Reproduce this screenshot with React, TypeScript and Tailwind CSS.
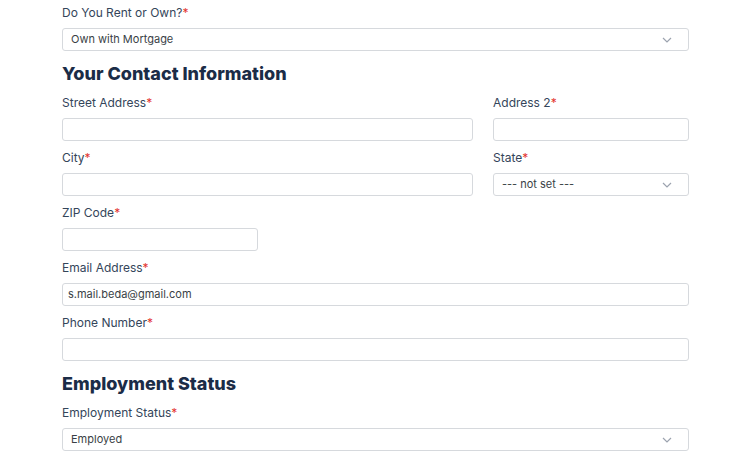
import React from "react";

const Chev = () => (
  <svg width="10" height="6" viewBox="0 0 10 6" className="absolute right-[16px] top-[8px]" fill="none" stroke="#9ca3af" strokeWidth="1.2"><path d="M1 1l4 4 4-4" /></svg>
);

function Field({ label, value, select, w }: { label: string; value?: string; select?: boolean; w?: string }) {
  return (
    <div className={`pt-[9px] ${w ?? ""}`}>
      <div className="h-[16px] leading-[16px] mb-[7px] text-[12px] text-[#34455a]">
        {label}<span className="text-[#e3342f]">*</span>
      </div>
      <div className="relative h-[23px] border border-[#d6d9dd] rounded-[3px] bg-white flex items-center text-[11px] text-[#3a3f46]" style={{ paddingLeft: select ? 8 : 5 }}>
        {value}
        {select && <Chev />}
      </div>
    </div>
  );
}

const H = ({ t }: { t: string }) => (
  <div className="pt-[12px] pb-[10px] leading-[22px] text-[18px] font-extrabold text-[#1b2c47]">{t}</div>
);

export default function App() {
  return (
    <div className="w-[752px] h-[451px] overflow-hidden bg-white" style={{ fontFamily: "Inter, 'Open Sans', sans-serif" }}>
      <div className="ml-[62px] w-[627px]" style={{ marginTop: -4 }}>
        <Field label="Do You Rent or Own?" value="Own with Mortgage" select />
        <H t="Your Contact Information" />
        <div className="flex gap-[20px] -mt-[9px]">
          <Field label="Street Address" w="flex-1" />
          <Field label="Address 2" w="w-[196px]" />
        </div>
        <div className="flex gap-[20px]">
          <Field label="City" w="flex-1" />
          <Field label="State" value="--- not set ---" select w="w-[196px]" />
        </div>
        <Field label="ZIP Code" w="w-[196px]" />
        <Field label="Email Address" value="s.mail.beda@gmail.com" />
        <Field label="Phone Number" />
        <H t="Employment Status" />
        <div className="-mt-[9px]">
          <Field label="Employment Status" value="Employed" select />
        </div>
      </div>
    </div>
  );
}
